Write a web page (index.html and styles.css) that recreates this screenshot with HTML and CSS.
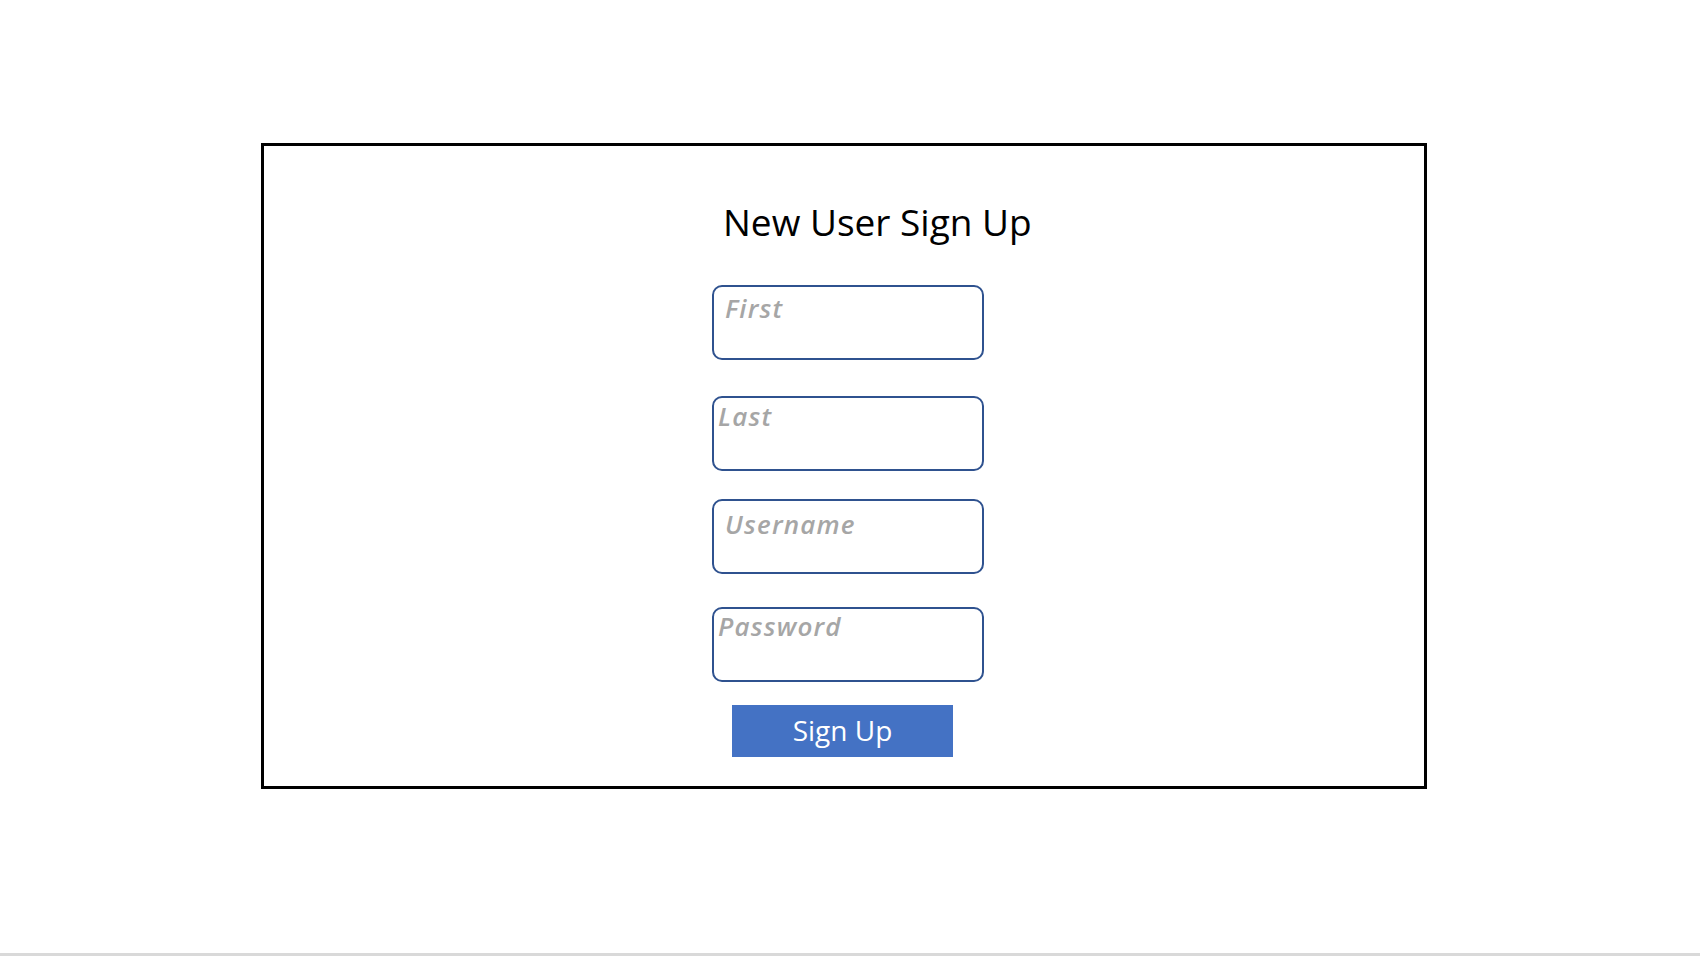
FILE: index.html
```html
<!DOCTYPE html>
<html>
<head>
<meta charset="utf-8">
<title>New User Sign Up</title>
<link rel="stylesheet" href="styles.css">
</head>
<body>
<div class="page">
  <div class="frame">
    <h1 class="title">New User Sign Up</h1>
    <div class="field field--first"><span class="placeholder">First</span></div>
    <div class="field field--last"><span class="placeholder">Last</span></div>
    <div class="field field--username"><span class="placeholder">Username</span></div>
    <div class="field field--password"><span class="placeholder">Password</span></div>
    <div class="button">Sign Up</div>
  </div>
</div>
</body>
</html>
```
FILE: styles.css
```css
html, body {
  margin: 0;
  padding: 0;
  background: #ffffff;
}

.page {
  width: 1700px;
  height: 956px;
  box-sizing: border-box;
  border-bottom: 3px solid #d9d9d9;
  padding-top: 143px;
  padding-left: 261px;
  font-family: "Open Sans", Lato, sans-serif;
}

.frame {
  width: 1166px;
  height: 646px;
  box-sizing: border-box;
  border: 3px solid #000000;
  display: flex;
  flex-direction: column;
  align-items: flex-start;
}

.title {
  margin: 58px 0 0 459px;
  font-size: 37px;
  line-height: 36px;
  font-weight: 400;
  color: #000000;
}

.field {
  width: 272px;
  height: 75px;
  box-sizing: border-box;
  border: 2px solid #2f528f;
  border-radius: 10px;
  margin-left: 448px;
}

.placeholder {
  display: block;
  font-size: 26px;
  line-height: 26px;
  letter-spacing: 1.2px;
  font-style: italic;
  font-weight: 600;
  color: #a6a6a6;
}

.field--first {
  margin-top: 45px;
  padding: 8px 0 0 11px;
}

.field--last {
  margin-top: 36px;
  padding: 5px 0 0 4px;
}

.field--username {
  margin-top: 28px;
  padding: 10px 0 0 11px;
}

.field--password {
  margin-top: 33px;
  padding: 4px 0 0 4px;
}

.button {
  margin: 23px 0 0 468px;
  width: 221px;
  height: 52px;
  background: #4472c4;
  color: #ffffff;
  font-size: 28px;
  line-height: 50px;
  text-align: center;
}
```
